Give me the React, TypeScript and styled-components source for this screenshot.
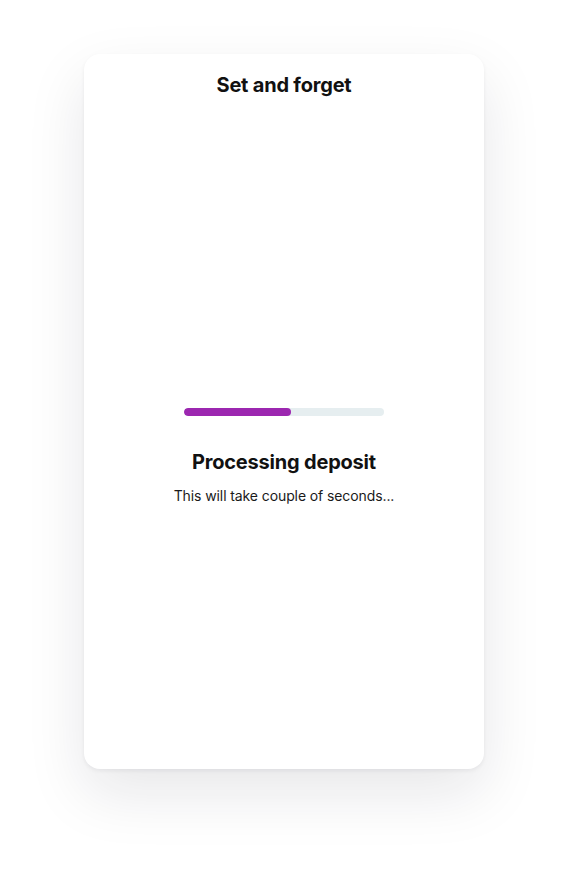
import React, { FC } from "react";
import styled, { createGlobalStyle } from "styled-components";

const GlobalStyle = createGlobalStyle`
  html, body {
    margin: 0;
    padding: 0;
    background: #ffffff;
    font-family: Inter, "Noto Sans", "Liberation Sans", sans-serif;
    color: #111111;
  }
`;

interface BarProps {
  progress: number;
}

const ProgressBar: FC<BarProps> = ({ progress }) => (
  <Track>
    <Fill style={{ width: `${progress}%` }} />
  </Track>
);

const App: FC = () => (
  <>
    <GlobalStyle />
    <Page>
      <Card>
        <Title>Set and forget</Title>
        <Body>
          <ProgressBar progress={53.5} />
          <Heading>Processing deposit</Heading>
          <Caption>This will take couple of seconds...</Caption>
        </Body>
      </Card>
    </Page>
  </>
);

export default App;

const Page = styled.div`
  display: flex;
  justify-content: center;
  padding-top: 54px;
  height: 829px;
`;

const Card = styled.div`
  display: flex;
  flex-direction: column;
  align-items: center;
  width: 400px;
  height: 715px;
  box-sizing: border-box;
  background: #ffffff;
  border-radius: 16px;
  box-shadow: 0 2px 4px rgba(20, 20, 40, 0.06), 0 24px 60px rgba(20, 20, 40, 0.1);
`;

const Title = styled.h1`
  margin: 19px 0 0;
  font-size: 20px;
  line-height: 24px;
  font-weight: 700;
  letter-spacing: -0.2px;
`;

const Body = styled.div`
  display: flex;
  flex-direction: column;
  align-items: center;
  margin-top: 311px;
`;

const Track = styled.div`
  width: 200px;
  height: 8px;
  border-radius: 4px;
  background: #e6eef0;
  overflow: hidden;
`;

const Fill = styled.div`
  height: 100%;
  border-radius: 4px;
  background: #9c27b0;
`;

const Heading = styled.h2`
  margin: 33px 0 0;
  font-size: 20px;
  line-height: 26px;
  font-weight: 700;
  letter-spacing: -0.2px;
`;

const Caption = styled.p`
  margin: 11px 0 0;
  font-size: 14px;
  line-height: 20px;
  letter-spacing: -0.1px;
  color: #1a1a1a;
`;
